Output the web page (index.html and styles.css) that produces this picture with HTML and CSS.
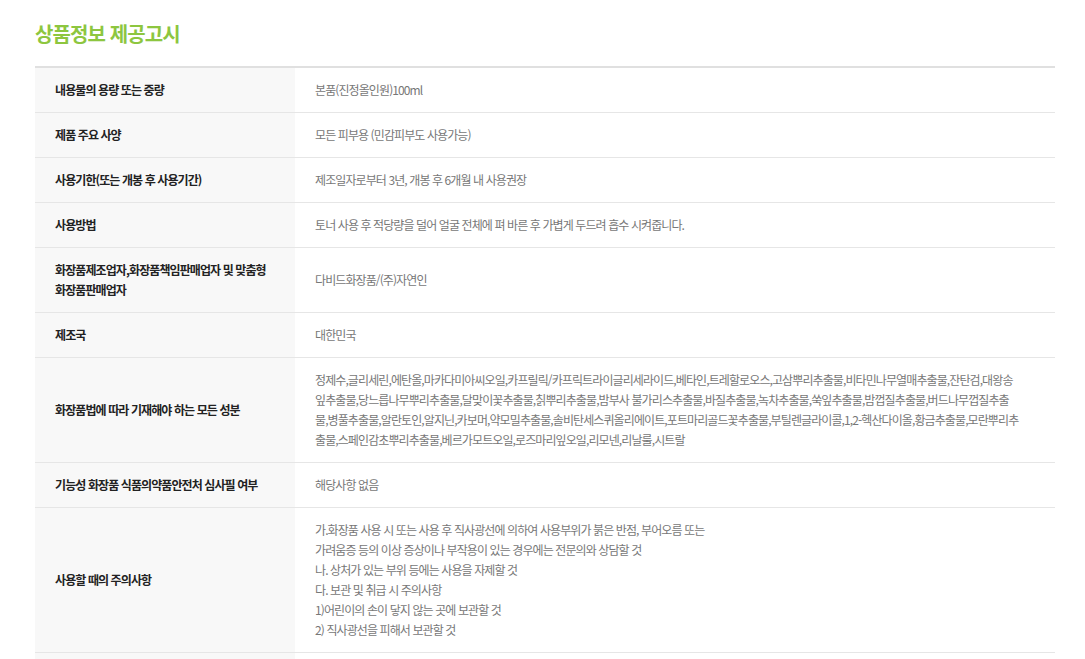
FILE: index.html
```html
<!DOCTYPE html>
<html lang="ko">
<head>
    <meta charset="UTF-8">
    <meta name="viewport" content="width=device-width, initial-scale=1.0">
    <title>상품정보 제공고시</title>
    <link rel="stylesheet" href="styles.css">
</head>
<body>
    <div class="notice">
        <h2 class="notice-title">상품정보 제공고시</h2>

        <table class="info-table">
            <tr>
                <th>내용물의 용량 또는 중량</th>
                <td>본품(진정올인원)100ml</td>
            </tr>
            <tr>
                <th>제품 주요 사양</th>
                <td>모든 피부용 (민감피부도 사용가능)</td>
            </tr>
            <tr>
                <th>사용기한(또는 개봉 후 사용기간)</th>
                <td>제조일자로부터 3년, 개봉 후 6개월 내 사용권장</td>
            </tr>
            <tr>
                <th>사용방법</th>
                <td>토너 사용 후 적당량을 덜어 얼굴 전체에 펴 바른 후 가볍게 두드려 흡수 시켜줍니다.</td>
            </tr>
            <tr>
                <th>화장품제조업자,화장품책임판매업자 및 맞춤형<br>화장품판매업자</th>
                <td>다비드화장품/(주)자연인</td>
            </tr>
            <tr>
                <th>제조국</th>
                <td>대한민국</td>
            </tr>
            <tr>
                <th>화장품법에 따라 기재해야 하는 모든 성분</th>
                <td class="ingredients">정제수,글리세린,에탄올,마카다미아씨오일,카프릴릭/카프릭트라이글리세라이드,베타인,트레할로오스,고삼뿌리추출물,비타민나무열매추출물,잔탄검,대왕송<br>잎추출물,당느릅나무뿌리추출물,달맞이꽃추출물,칡뿌리추출물,밤부사 불가리스추출물,바질추출물,녹차추출물,쑥잎추출물,밤껍질추출물,버드나무껍질추출<br>물,병풀추출물,알란토인,알지닌,카보머,약모밀추출물,솔비탄세스퀴올리에이트,포트마리골드꽃추출물,부틸렌글라이콜,1,2-헥산다이올,황금추출물,모란뿌리추<br>출물,스페인감초뿌리추출물,베르가모트오일,로즈마리잎오일,리모넨,리날룰,시트랄</td>
            </tr>
            <tr>
                <th>기능성 화장품 식품의약품안전처 심사필 여부</th>
                <td>해당사항 없음</td>
            </tr>
            <tr>
                <th>사용할 때의 주의사항</th>
                <td>가.화장품 사용 시 또는 사용 후 직사광선에 의하여 사용부위가 붉은 반점, 부어오름 또는<br>
                    가려움증 등의 이상 증상이나 부작용이 있는 경우에는 전문의와 상담할 것<br>
                    나. 상처가 있는 부위 등에는 사용을 자제할 것<br>
                    다. 보관 및 취급 시 주의사항<br>
                    1)어린이의 손이 닿지 않는 곳에 보관할 것<br>
                    2) 직사광선을 피해서 보관할 것</td>
            </tr>
            <tr>
                <th>&nbsp;</th>
                <td>&nbsp;</td>
            </tr>
        </table>
    </div>
</body>
</html>
```

FILE: styles.css
```css
body {
    margin: 0;
    background: #fff;
    font-family: "Noto Sans CJK KR", "Noto Sans", sans-serif;
}
.notice {
    padding: 20px 30px 0 35px;
}
.notice-title {
    margin: 0 0 18px;
    font-size: 20px;
    line-height: 28px;
    font-weight: bold;
    letter-spacing: -0.9px;
    color: #8dc63f;
}
.info-table {
    width: 1020px;
    border-collapse: collapse;
    border-top: 2px solid #e0e0e0;
    font-size: 12px;
    line-height: 20px;
    letter-spacing: -0.9px;
}
.info-table th,
.info-table td {
    padding: 12px 20px;
    border-bottom: 1px solid #e6e6e6;
    text-align: left;
    vertical-align: middle;
}
.info-table th {
    width: 220px;
    background: #f8f8f8;
    color: #222;
    font-weight: bold;
}
.info-table td {
    color: #777;
    font-weight: normal;
}
.ingredients {
    word-break: break-all;
}
```
